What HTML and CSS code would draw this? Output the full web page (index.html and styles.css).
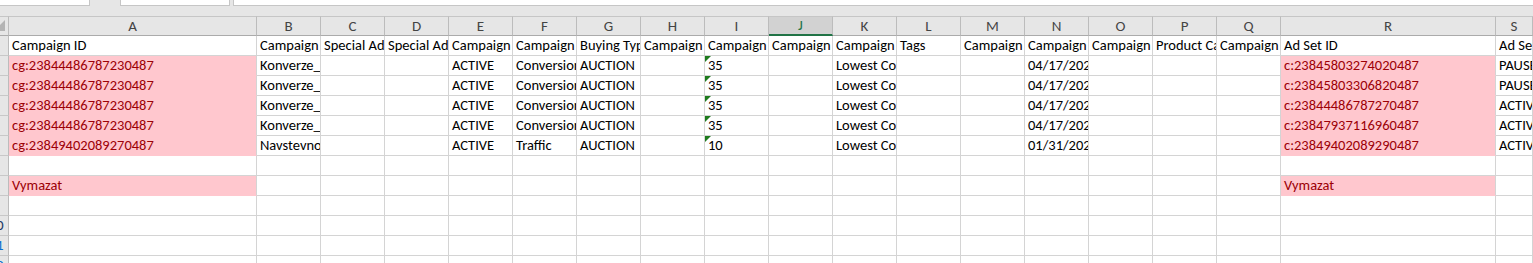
FILE: index.html
```html
<!DOCTYPE html>
<html lang="sk">
<head>
<meta charset="utf-8">
<title>Sheet</title>
<link rel="stylesheet" href="styles.css">
</head>
<body>
<div class="topbar">
  <div class="box box-name"></div>
  <div class="box box-mid"></div>
  <div class="box box-formula"></div>
</div>
<div class="sheet">
  <div class="row">
    <div class="corner"><svg width="9" height="18" viewBox="0 0 9 18"><polygon points="5,3 5,14 -6,14" fill="#b4b4b4"/></svg></div>
    <div class="ch">A</div><div class="ch">B</div><div class="ch">C</div><div class="ch">D</div><div class="ch">E</div><div class="ch">F</div><div class="ch">G</div><div class="ch">H</div><div class="ch">I</div><div class="ch sel">J</div><div class="ch">K</div><div class="ch">L</div><div class="ch">M</div><div class="ch">N</div><div class="ch">O</div><div class="ch">P</div><div class="ch">Q</div><div class="ch">R</div><div class="ch">S</div>
  </div>
  <div class="row">
    <div class="rh"></div>
    <div class="c">Campaign ID</div><div class="c">Campaign Name</div><div class="c">Special Ad Categories</div><div class="c">Special Ad Category Country</div><div class="c">Campaign Status</div><div class="c">Campaign Objective</div><div class="c">Buying Type</div><div class="c">Campaign Spend Limit</div><div class="c">Campaign Daily Budget</div><div class="c">Campaign Lifetime Budget</div><div class="c">Campaign Bid Strategy</div><div class="c">Tags</div><div class="c">Campaign Is Using L3 Schedule</div><div class="c">Campaign Start Time</div><div class="c">Campaign Stop Time</div><div class="c">Product Catalog ID</div><div class="c">Campaign Page ID</div><div class="c">Ad Set ID</div><div class="c">Ad Set Run Status</div>
  </div>
  <div class="row">
    <div class="rh"></div>
    <div class="c pk">cg:23844486787230487</div><div class="c">Konverze_Web_2020</div><div class="c"></div><div class="c"></div><div class="c">ACTIVE</div><div class="c">Conversions</div><div class="c">AUCTION</div><div class="c"></div><div class="c tri">35</div><div class="c"></div><div class="c">Lowest Cost</div><div class="c"></div><div class="c"></div><div class="c">04/17/2020 12:00:00 am</div><div class="c"></div><div class="c"></div><div class="c"></div><div class="c pk">c:23845803274020487</div><div class="c">PAUSED</div>
  </div>
  <div class="row">
    <div class="rh"></div>
    <div class="c pk">cg:23844486787230487</div><div class="c">Konverze_Web_2020</div><div class="c"></div><div class="c"></div><div class="c">ACTIVE</div><div class="c">Conversions</div><div class="c">AUCTION</div><div class="c"></div><div class="c tri">35</div><div class="c"></div><div class="c">Lowest Cost</div><div class="c"></div><div class="c"></div><div class="c">04/17/2020 12:00:00 am</div><div class="c"></div><div class="c"></div><div class="c"></div><div class="c pk">c:23845803306820487</div><div class="c">PAUSED</div>
  </div>
  <div class="row">
    <div class="rh"></div>
    <div class="c pk">cg:23844486787230487</div><div class="c">Konverze_Web_2020</div><div class="c"></div><div class="c"></div><div class="c">ACTIVE</div><div class="c">Conversions</div><div class="c">AUCTION</div><div class="c"></div><div class="c tri">35</div><div class="c"></div><div class="c">Lowest Cost</div><div class="c"></div><div class="c"></div><div class="c">04/17/2020 12:00:00 am</div><div class="c"></div><div class="c"></div><div class="c"></div><div class="c pk">c:23844486787270487</div><div class="c">ACTIVE</div>
  </div>
  <div class="row">
    <div class="rh"></div>
    <div class="c pk">cg:23844486787230487</div><div class="c">Konverze_Web_2020</div><div class="c"></div><div class="c"></div><div class="c">ACTIVE</div><div class="c">Conversions</div><div class="c">AUCTION</div><div class="c"></div><div class="c tri">35</div><div class="c"></div><div class="c">Lowest Cost</div><div class="c"></div><div class="c"></div><div class="c">04/17/2020 12:00:00 am</div><div class="c"></div><div class="c"></div><div class="c"></div><div class="c pk">c:23847937116960487</div><div class="c">ACTIVE</div>
  </div>
  <div class="row">
    <div class="rh"></div>
    <div class="c pk">cg:23849402089270487</div><div class="c">Navstevnost_Web</div><div class="c"></div><div class="c"></div><div class="c">ACTIVE</div><div class="c">Traffic</div><div class="c">AUCTION</div><div class="c"></div><div class="c tri">10</div><div class="c"></div><div class="c">Lowest Cost</div><div class="c"></div><div class="c"></div><div class="c">01/31/2020 12:00:00 am</div><div class="c"></div><div class="c"></div><div class="c"></div><div class="c pk">c:23849402089290487</div><div class="c">ACTIVE</div>
  </div>
  <div class="row">
    <div class="rh"></div>
    <div class="c"></div><div class="c"></div><div class="c"></div><div class="c"></div><div class="c"></div><div class="c"></div><div class="c"></div><div class="c"></div><div class="c"></div><div class="c"></div><div class="c"></div><div class="c"></div><div class="c"></div><div class="c"></div><div class="c"></div><div class="c"></div><div class="c"></div><div class="c"></div><div class="c"></div>
  </div>
  <div class="row">
    <div class="rh"></div>
    <div class="c pk">Vymazat</div><div class="c"></div><div class="c"></div><div class="c"></div><div class="c"></div><div class="c"></div><div class="c"></div><div class="c"></div><div class="c"></div><div class="c"></div><div class="c"></div><div class="c"></div><div class="c"></div><div class="c"></div><div class="c"></div><div class="c"></div><div class="c"></div><div class="c pk">Vymazat</div><div class="c"></div>
  </div>
  <div class="row">
    <div class="rh"></div>
    <div class="c"></div><div class="c"></div><div class="c"></div><div class="c"></div><div class="c"></div><div class="c"></div><div class="c"></div><div class="c"></div><div class="c"></div><div class="c"></div><div class="c"></div><div class="c"></div><div class="c"></div><div class="c"></div><div class="c"></div><div class="c"></div><div class="c"></div><div class="c"></div><div class="c"></div>
  </div>
  <div class="row">
    <div class="rh"><span class="rn">10</span></div>
    <div class="c"></div><div class="c"></div><div class="c"></div><div class="c"></div><div class="c"></div><div class="c"></div><div class="c"></div><div class="c"></div><div class="c"></div><div class="c"></div><div class="c"></div><div class="c"></div><div class="c"></div><div class="c"></div><div class="c"></div><div class="c"></div><div class="c"></div><div class="c"></div><div class="c"></div>
  </div>
  <div class="row">
    <div class="rh"><span class="rn blue">11</span></div>
    <div class="c"></div><div class="c"></div><div class="c"></div><div class="c"></div><div class="c"></div><div class="c"></div><div class="c"></div><div class="c"></div><div class="c"></div><div class="c"></div><div class="c"></div><div class="c"></div><div class="c"></div><div class="c"></div><div class="c"></div><div class="c"></div><div class="c"></div><div class="c"></div><div class="c"></div>
  </div>
  <div class="row">
    <div class="rh"><span class="rn blue">12</span></div>
    <div class="c"></div><div class="c"></div><div class="c"></div><div class="c"></div><div class="c"></div><div class="c"></div><div class="c"></div><div class="c"></div><div class="c"></div><div class="c"></div><div class="c"></div><div class="c"></div><div class="c"></div><div class="c"></div><div class="c"></div><div class="c"></div><div class="c"></div><div class="c"></div><div class="c"></div>
  </div>
</div>
</body>
</html>
```

FILE: styles.css
```css
* { box-sizing: border-box; }
html, body { margin: 0; padding: 0; }
body {
  width: 1533px;
  height: 263px;
  overflow: hidden;
  background: #e6e6e6;
  font-family: Carlito, "Liberation Sans", sans-serif;
  font-size: 15px;
}
.topbar {
  display: flex;
  align-items: flex-start;
  height: 16px;
}
.box {
  height: 6px;
  background: #fff;
  border: 1px solid #c6c6c6;
  border-top: 0;
}
.box-name { width: 90px; border-left: 0; }
.box-mid { width: 110px; margin-left: 30px; }
.box-formula { flex: 1; margin-left: 3px; border-right: 0; }

.sheet {
  display: grid;
  grid-template-columns: 9px 248px repeat(16, 64px) 215px 1fr;
  grid-auto-rows: 20px;
  background: #fff;
}
.row { display: contents; }

.corner {
  background: #e6e6e6;
  border-top: 1px solid #c6c6c6;
  border-right: 1px solid #bcbcbc;
  border-bottom: 1px solid #ababab;
  overflow: hidden;
}
.corner svg { display: block; }
.ch {
  background: #e6e6e6;
  border-top: 1px solid #c6c6c6;
  border-right: 1px solid #bcbcbc;
  border-bottom: 1px solid #ababab;
  text-align: center;
  line-height: 18px;
  color: #444;
}
.ch.sel {
  background: #d2d2d2;
  color: #217346;
  border-bottom: 2px solid #217346;
  line-height: 17px;
}
.rh {
  background: #e6e6e6;
  border-right: 1px solid #bcbcbc;
  border-bottom: 1px solid #c8c8c8;
  display: flex;
  justify-content: flex-end;
  overflow: hidden;
}
.rn {
  flex: none;
  width: 24px;
  text-align: center;
  line-height: 19px;
  color: #203864;
}
.rn.blue { color: #0a6fd0; }

.c {
  position: relative;
  border-right: 1px solid #d4d4d4;
  border-bottom: 1px solid #d4d4d4;
  padding-left: 3px;
  font-size: 14.5px;
  line-height: 19px;
  white-space: nowrap;
  overflow: hidden;
  color: #000;
}
.c.pk {
  background: #ffc7ce;
  color: #9c0006;
  border-bottom-color: #ffc7ce;
}
.c.tri::before {
  content: "";
  position: absolute;
  left: 0;
  top: 0;
  border-top: 6px solid #1d7a1d;
  border-right: 6px solid transparent;
}
```
